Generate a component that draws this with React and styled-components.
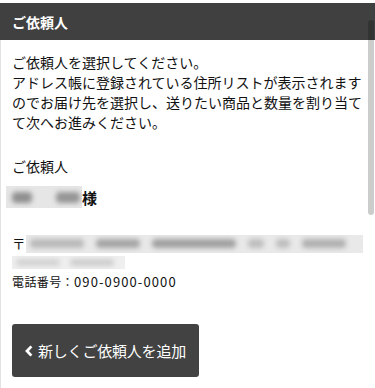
import React from "react";
import styled, { createGlobalStyle } from "styled-components";

const Global = createGlobalStyle`
  html, body {
    margin: 0;
    padding: 0;
    background: #fff;
  }
  body {
    font-family: "Noto Sans CJK JP", "Noto Sans", sans-serif;
    color: #111;
  }
`;

const Panel = styled.div`
  position: relative;
  width: 375px;
  height: 388px;
  padding-top: 3px;
  box-sizing: border-box;
  overflow: hidden;
`;

const Header = styled.div`
  height: 37px;
  background: #404040;
  color: #fff;
  display: flex;
  align-items: center;
  padding: 0 12px;
  font-size: 14px;
  font-weight: 700;
`;

const Body = styled.div`
  border-left: 1px solid #e2e2e2;
  padding: 12px 12px 0 11px;
  height: 348px;
  box-sizing: border-box;
`;

const Intro = styled.p`
  margin: 0;
  font-size: 14px;
  line-height: 20px;
`;

const Label = styled.div`
  margin-top: 24px;
  font-size: 14px;
  line-height: 20px;
`;

const NameRow = styled.div`
  margin-top: 10px;
  margin-left: -6px;
  display: flex;
  align-items: center;
  height: 22px;
`;

const Sama = styled.span`
  font-size: 15px;
  font-weight: 700;
`;

const Blur = styled.span`
  display: inline-flex;
  align-items: center;
  gap: ${(p) => p.gap || 20}px;
  width: ${(p) => p.w}px;
  height: ${(p) => p.h || 18}px;
  padding-left: ${(p) => p.pad || 4}px;
  box-sizing: border-box;
  background: ${(p) => p.bg || "#e8e8e8"};
  overflow: hidden;
  vertical-align: middle;
`;

const Ink = styled.span`
  display: inline-block;
  width: ${(p) => p.w}px;
  height: ${(p) => p.h || 9}px;
  border-radius: 4px;
  background: ${(p) => p.c || "#a0a0a0"};
  filter: blur(2.5px);
  flex-shrink: 0;
`;

const Address = styled.div`
  margin-top: 26px;
  font-size: 12px;
  line-height: 19px;
`;

const Line = styled.div`
  display: flex;
  align-items: center;
  height: 19px;
`;

const Postal = styled.span`
  font-size: 13.5px;
`;

const Phone = styled.div`
  font-size: 12px;
  line-height: 19px;
  letter-spacing: 0.4px;

  span {
    font-size: 13px;
    letter-spacing: 1.1px;
  }
`;

const AddButton = styled.button`
  margin-top: 33px;
  display: inline-flex;
  align-items: center;
  gap: 5px;
  height: 53px;
  padding: 0 13px;
  background: #424242;
  color: #fff;
  border: none;
  border-radius: 3px;
  font-family: inherit;
  font-size: 15px;
  letter-spacing: -0.2px;
  cursor: pointer;

  svg {
    margin-top: 1px;
  }
`;

const Thumb = styled.div`
  position: absolute;
  right: 1px;
  top: 20px;
  width: 6px;
  height: 195px;
  border-radius: 3px;
  background: rgba(0, 0, 0, 0.2);
`;

const Chevron = () => (
  <svg width="8" height="12" viewBox="0 0 8 12">
    <polyline
      points="6.4,1.4 2,6 6.4,10.6"
      fill="none"
      stroke="#fff"
      strokeWidth="2.8"
    />
  </svg>
);

export default function App() {
  return (
    <>
      <Global />
      <Panel>
        <Header>ご依頼人</Header>
        <Body>
          <Intro>
            ご依頼人を選択してください。
            <br />
            アドレス帳に登録されている住所リストが表示されますのでお届け先を選択し、送りたい商品と数量を割り当てて次へお進みください。
          </Intro>
          <Label>ご依頼人</Label>
          <NameRow>
            <Blur w={76} h={22} gap={24} pad={6} bg="#e6e6e6">
              <Ink w={20} h={11} c="#8f8f8f" />
              <Ink w={24} h={11} c="#959595" />
            </Blur>
            <Sama>様</Sama>
          </NameRow>
          <Address>
            <Line>
              <Postal>〒</Postal>
              <Blur w={346} h={18} gap={12} pad={4} bg="#e9e9e9">
                <Ink w={54} c="#b9b9b9" />
                <Ink w={44} c="#a5a5a5" />
                <Ink w={84} c="#a0a0a0" />
                <Ink w={16} c="#bdbdbd" />
                <Ink w={14} c="#bdbdbd" />
                <Ink w={44} c="#b0b0b0" />
              </Blur>
            </Line>
            <Line>
              <Blur w={113} h={13} gap={10} pad={4} bg="#efefef">
                <Ink w={44} h={7} c="#d2d2d2" />
                <Ink w={44} h={7} c="#cdcdcd" />
              </Blur>
            </Line>
            <Phone>
              電話番号：<span>090-0900-0000</span>
            </Phone>
          </Address>
          <AddButton>
            <Chevron />
            新しくご依頼人を追加
          </AddButton>
        </Body>
        <Thumb />
      </Panel>
    </>
  );
}
